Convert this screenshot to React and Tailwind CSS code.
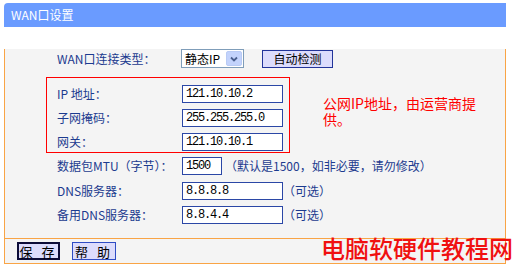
import React from "react";

const cjk = "font-['Noto_Sans_CJK_SC',sans-serif]";
const mono = "font-['Liberation_Mono','Noto_Sans_CJK_SC',monospace]";

function Field({ value, width = "w-[101px]" }) {
  return (
    <input
      readOnly
      value={value}
      className={`${width} h-[18px] border border-[#2b47a6] bg-white pl-[3px] text-[12px] tracking-[-1.2px] text-black outline-none ${mono}`}
    />
  );
}

function Label({ children, width = "w-[125px]" }) {
  return (
    <div className={`${width} shrink-0 text-[12px] leading-[18px] text-[#1c3b8f]`}>
      {children}
    </div>
  );
}

export default function App() {
  return (
    <div className={`relative w-[523px] h-[276px] bg-white overflow-hidden ${cjk}`}>
      <div className="ml-[4px] pt-[3px] w-[502px]">
        {/* header */}
        <div className="h-[24px] rounded-tl-[4px] bg-[#6a9bff] pl-[7px] flex items-center text-[12px] text-white">
          WAN口设置
        </div>

        <div className="border-x border-b border-[#f9a445] bg-[#f4f4f4]">
          <div className="pb-[14px] border-b border-[#f9a445]">
            {/* connection type */}
            <div className="mt-[22px] pl-[52px] flex items-center h-[19px]">
              <Label width="w-[124px]">WAN口连接类型：</Label>
              <div className="w-[63px] h-[19px] border border-[#7f9db9] bg-white flex items-center justify-between pl-[3px] pr-[1px]">
                <span className="text-[12px] text-black">静态IP</span>
                <span className="w-[16px] h-[15px] rounded-[2px] bg-[#c3d3fc] border border-[#b9cbf5] flex items-center justify-center">
                  <svg width="8" height="6" viewBox="0 0 8 6">
                    <polyline points="1,1.5 4,4.5 7,1.5" fill="none" stroke="#4a5f8e" strokeWidth="1.8" />
                  </svg>
                </span>
              </div>
              <button className="ml-[18px] w-[71px] h-[18px] border border-[#22349a] bg-[#dcdcfc] text-[12px] leading-none text-black">
                自动检测
              </button>
            </div>

            {/* static address block */}
            <div className="mt-[9px] flex items-start">
              <div className="ml-[41px] w-[244px] border border-[#ff0000] pl-[10px] pt-[7px] pb-[1px] flex flex-col gap-[6px]">
                <div className="flex items-center h-[18px]">
                  <Label>IP 地址：</Label>
                  <Field value="121.10.10.2" />
                </div>
                <div className="flex items-center h-[18px]">
                  <Label>子网掩码：</Label>
                  <Field value="255.255.255.0" />
                </div>
                <div className="flex items-center h-[18px]">
                  <Label>网关：</Label>
                  <Field value="121.10.10.1" />
                </div>
              </div>
              <div className="ml-[33px] mt-[18px] w-[164px] text-[14px] leading-[16px] text-[#ff0000]">
                公网IP地址，由运营商提供。
              </div>
            </div>

            <div className="mt-[4px] pl-[52px] flex items-center h-[18px]">
              <Label>数据包MTU（字节）：</Label>
              <Field value="1500" width="w-[40px]" />
              <span className="ml-[3px] text-[12px] text-[#1c3b8f]">（默认是1500，如非必要，请勿修改）</span>
            </div>
            <div className="mt-[7px] pl-[52px] flex items-center h-[18px]">
              <Label>DNS服务器：</Label>
              <Field value="8.8.8.8" />
              <span className="text-[12px] text-[#1c3b8f]">（可选）</span>
            </div>
            <div className="mt-[6px] pl-[52px] flex items-center h-[18px]">
              <Label>备用DNS服务器：</Label>
              <Field value="8.8.4.4" />
              <span className="text-[12px] text-[#1c3b8f]">（可选）</span>
            </div>
          </div>

          {/* footer */}
          <div className="h-[24px] pl-[12px] flex items-center gap-[12px]">
            <button className="w-[43px] h-[18px] border-2 border-[#0c0c38] bg-[#dcdcfc] text-[13px] leading-none tracking-[3px] text-black">
              保 存
            </button>
            <button className="w-[44px] h-[18px] border border-[#2f4cc4] bg-[#dcdcfc] text-[13px] leading-none tracking-[3px] text-black">
              帮 助
            </button>
          </div>
        </div>
      </div>

      {/* watermark */}
      <div className="absolute left-[321px] top-[236px] text-[24px] leading-none font-medium text-[#f01010] whitespace-nowrap">
        电脑软硬件教程网
      </div>
    </div>
  );
}
